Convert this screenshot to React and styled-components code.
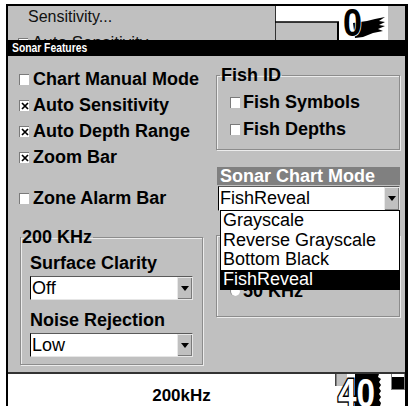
import React from 'react';
import styled, { createGlobalStyle } from 'styled-components';

const Global = createGlobalStyle`
  html, body { margin: 0; padding: 0; background: #fff; }
  body { font-family: "Liberation Sans", Arial, sans-serif; overflow: hidden; }
  #root { width: 412px; height: 406px; overflow: hidden; }
`;

const Screen = styled.div`
  margin: 4px 0 0 6px;
  width: 402px;
  box-sizing: border-box;
  border-top: 2px solid #000;
  border-left: 2px solid #000;
  border-right: 3px solid #000;
  display: flex;
  flex-direction: column;
`;

const BackMenu = styled.div`
  height: 34px;
  background: #c0c0c0;
  display: flex;
`;

const BackText = styled.div`
  flex: 1;
  overflow: hidden;
  padding-top: 2px;
`;

const BackLine = styled.div`
  display: flex;
  align-items: center;
  gap: ${p => (p.$check ? '4px' : '0')};
  padding-left: ${p => p.$indent}px;
  margin-top: ${p => p.$mt || 0}px;
  font-size: ${p => p.$size}px;
  line-height: 18px;
  color: #111;
  white-space: nowrap;
`;

const SonarView = styled.svg`
  display: block;
  flex: none;
`;

const BackRight = styled.div`
  width: 17px;
  flex: none;
`;

const TitleBar = styled.div`
  height: 16px;
  background: #000;
  color: #fff;
  padding-left: 4px;
  font-size: 12px;
  font-weight: bold;
  line-height: 16px;
  overflow: hidden;
  white-space: nowrap;
`;

const TitleText = styled.span`
  display: inline-block;
  transform: scaleX(0.86);
  transform-origin: left center;
`;

const Panel = styled.div`
  height: 316px;
  background: #c0c0c0;
  display: flex;
  color: #000;
`;

const LeftCol = styled.div`
  width: 208px;
  flex: none;
  box-sizing: border-box;
  padding: 10px 0 0 11px;
`;

const RightCol = styled.div`
  width: 184px;
  flex: none;
  padding-top: 11px;
  display: flex;
  flex-direction: column;
`;

const OptionRow = styled.div`
  height: ${p => p.$h || 26}px;
  margin-top: ${p => p.$mt || 0}px;
  display: flex;
  align-items: center;
  gap: ${p => p.$gap ?? 4}px;
  font-size: 18px;
  font-weight: bold;
  white-space: nowrap;
`;

const Box = styled.span`
  width: 10px;
  height: 11px;
  flex: none;
  box-sizing: border-box;
  background: #fff;
  border-top: 1px solid #7a7a7a;
  border-left: 1px solid #7a7a7a;
  display: flex;
  align-items: center;
  justify-content: center;
`;

const Radio = styled.span`
  width: 10px;
  height: 10px;
  flex: none;
  box-sizing: border-box;
  border-radius: 50%;
  background: #fff;
  border-top: 1px solid #8a8a8a;
  border-left: 1px solid #8a8a8a;
`;

const Check = ({ checked }) => (
  <Box>
    {checked && (
      <svg width="8" height="8" viewBox="0 0 8 8">
        <path d="M1 1 L7 7 M7 1 L1 7" stroke="#000" strokeWidth="1.7" />
      </svg>
    )}
  </Box>
);

const Group = styled.fieldset`
  margin: ${p => p.$mt}px 0 0 ${p => p.$ml}px;
  width: ${p => p.$w}px;
  box-sizing: border-box;
  padding: 0;
  border: 1px solid #8c8c8c;
  box-shadow: inset 1px 1px 0 #ececec, 1px 1px 0 #ececec;
  min-width: 0;
`;

const Legend = styled.legend`
  margin-left: ${p => p.$ml || 0}px;
  padding: 0 1px;
  font-size: 18px;
  font-weight: bold;
  line-height: 16px;
  white-space: nowrap;
`;

const GroupBody = styled.div`
  padding: ${p => p.$pad};
`;

const FieldLabel = styled.div`
  font-size: 18px;
  font-weight: bold;
  line-height: 20px;
  margin-top: ${p => p.$mt || 0}px;
  white-space: nowrap;
`;

const SelectBox = styled.div`
  margin-top: ${p => p.$mt || 0}px;
  margin-left: ${p => p.$ml || 0}px;
  width: ${p => p.$w}px;
  height: ${p => p.$h}px;
  box-sizing: border-box;
  display: flex;
  background: #fff;
  border-left: 1px solid #000;
  border-top: 1px solid #5a5a5a;
  border-right: 1px solid #e6e6e6;
  border-bottom: 1px solid #e6e6e6;
  position: relative;
`;

const SelectValue = styled.div`
  flex: 1;
  padding-left: 1px;
  font-size: 18px;
  line-height: ${p => p.$lh}px;
  white-space: nowrap;
  overflow: hidden;
`;

const ArrowBtn = styled.div`
  width: 15px;
  flex: none;
  background: #c0c0c0;
  box-shadow: inset 1px 1px 0 #e8e8e8, inset -1px -1px 0 #7a7a7a;
  display: flex;
  align-items: center;
  justify-content: center;
`;

const ModeHeader = styled.div`
  margin: 17px 0 0 1px;
  height: 18px;
  background: #808080;
  color: #fff;
  padding-left: 3px;
  font-size: 18px;
  font-weight: bold;
  line-height: 18px;
  white-space: nowrap;
`;

const OptionList = styled.div`
  position: absolute;
  top: 100%;
  left: 1px;
  right: -1px;
  z-index: 2;
  background: #fff;
  border: 1px solid #000;
`;

const OptionItem = styled.div`
  height: 19.5px;
  padding-left: 2px;
  font-size: 18px;
  line-height: 19px;
  white-space: nowrap;
  background: ${p => (p.$selected ? '#000' : '#fff')};
  color: ${p => (p.$selected ? '#fff' : '#000')};
`;

const Separator = styled.div`
  height: 2px;
  background: #333;
`;

const Status = styled.div`
  height: 32px;
  background: #fff;
  display: flex;
  align-items: flex-start;
`;

const FreqLabel = styled.div`
  width: 327px;
  flex: none;
  box-sizing: border-box;
  padding: 12px 0 0 20px;
  text-align: center;
  font-size: 17px;
  font-weight: bold;
  line-height: 20px;
`;

const DepthView = styled.svg`
  display: block;
  flex: none;
`;

const Indicator = styled.div`
  margin-left: 6px;
  width: 14px;
  height: 16px;
  box-sizing: border-box;
  border: 1px solid #808080;
  border-top: none;
  background: linear-gradient(#fff 0 3px, #000 3px);
`;

const Arrow = () => (
  <svg width="8" height="5" viewBox="0 0 8 5">
    <path d="M0 0 H8 L4 5 Z" fill="#000" />
  </svg>
);

const Select = ({ value, w, h, mt, ml, children }) => (
  <SelectBox $w={w} $h={h} $mt={mt} $ml={ml}>
    <SelectValue $lh={h - 2}>{value}</SelectValue>
    <ArrowBtn>
      <Arrow />
    </ArrowBtn>
    {children}
  </SelectBox>
);

const modes = ['Grayscale', 'Reverse Grayscale', 'Bottom Black', 'FishReveal'];

export default function App() {
  return (
    <>
      <Global />
      <Screen>
        <BackMenu>
          <BackText>
            <BackLine $indent={20} $size={16}>Sensitivity...</BackLine>
            <BackLine $indent={10} $size={17} $mt={8} $check>
              <Check checked />
              Auto Sensitivity
            </BackLine>
          </BackText>
          <SonarView width="113" height="34" viewBox="0 0 113 34">
            <rect x="0" y="0" width="113" height="34" fill="#fff" />
            <rect x="1" y="16" width="62" height="18" fill="#c0c0c0" />
            <line x1="0.5" y1="0" x2="0.5" y2="34" stroke="#333" strokeWidth="1" />
            <line x1="0" y1="16" x2="64" y2="16" stroke="#000" strokeWidth="1.5" />
            <line x1="63" y1="16" x2="63" y2="34" stroke="#000" strokeWidth="2" />
            <path
              d="M78 17 L92 15 L100 13 L110 11 L104 15 L110 16 L104 19 L110 20 L103 23 L108 25 L98 27 L88 31 L80 32 Z"
              fill="#000"
            />
            <text
              x="68"
              y="30"
              fontFamily="Liberation Sans, Arial, sans-serif"
              fontWeight="bold"
              fontSize="38"
              textLength="19"
              lengthAdjust="spacingAndGlyphs"
              fill="#000"
              stroke="#fff"
              strokeWidth="1.5"
              paintOrder="stroke"
            >
              0
            </text>
          </SonarView>
          <BackRight />
        </BackMenu>

        <TitleBar>
          <TitleText>Sonar Features</TitleText>
        </TitleBar>

        <Panel>
          <LeftCol>
            <OptionRow><Check />Chart Manual Mode</OptionRow>
            <OptionRow><Check checked />Auto Sensitivity</OptionRow>
            <OptionRow><Check checked />Auto Depth Range</OptionRow>
            <OptionRow><Check checked />Zoom Bar</OptionRow>
            <OptionRow $mt={15}><Check />Zone Alarm Bar</OptionRow>

            <Group $mt={18} $ml={1} $w={183}>
              <Legend>200 KHz</Legend>
              <GroupBody $pad="8px 9px 7px 9px">
                <FieldLabel>Surface Clarity</FieldLabel>
                <Select value="Off" w={163} h={24} mt={3} />
                <FieldLabel $mt={10}>Noise Rejection</FieldLabel>
                <Select value="Low" w={163} h={24} mt={3} />
              </GroupBody>
            </Group>
          </LeftCol>

          <RightCol>
            <Group $mt={0} $ml={0} $w={184}>
              <Legend $ml={3}>Fish ID</Legend>
              <GroupBody $pad="6px 0 6px 13px">
                <OptionRow $h={27} $gap={3}><Check />Fish Symbols</OptionRow>
                <OptionRow $h={27} $gap={3}><Check />Fish Depths</OptionRow>
              </GroupBody>
            </Group>

            <ModeHeader>Sonar Chart Mode</ModeHeader>
            <Select value="FishReveal" w={182} h={25} mt={1} ml={2}>
              <OptionList>
                {modes.map(m => (
                  <OptionItem key={m} $selected={m === 'FishReveal'}>{m}</OptionItem>
                ))}
              </OptionList>
            </Select>

            <Group $mt={16} $ml={0} $w={184}>
              <Legend $ml={3}>Frequency</Legend>
              <GroupBody $pad="9px 0 12px 13px">
                <OptionRow $gap={3}><Radio />200 KHz</OptionRow>
                <OptionRow $gap={3}><Radio />50 KHz</OptionRow>
              </GroupBody>
            </Group>
          </RightCol>
        </Panel>

        <Separator />

        <Status>
          <FreqLabel>200kHz</FreqLabel>
          <DepthView width="50" height="32" viewBox="0 0 50 32">
            <rect x="0" y="0" width="12" height="12" fill="#c0c0c0" />
            <rect x="0" y="0" width="1.5" height="12" fill="#444" />
            <path
              d="M20 0 L44 0 L43 3 L46 5 L44 8 L46 11 L44 14 L46 17 L44 20 L46 23 L44 26 L46 29 L45 32 L20 32 Z"
              fill="#000"
            />
            <text
              x="3"
              y="33"
              fontFamily="Liberation Sans, Arial, sans-serif"
              fontWeight="bold"
              fontSize="40"
              textLength="37"
              lengthAdjust="spacingAndGlyphs"
              fill="#fff"
              stroke="#000"
              strokeWidth="3"
              paintOrder="stroke"
            >
              40
            </text>
          </DepthView>
          <Indicator />
        </Status>
      </Screen>
    </>
  );
}
